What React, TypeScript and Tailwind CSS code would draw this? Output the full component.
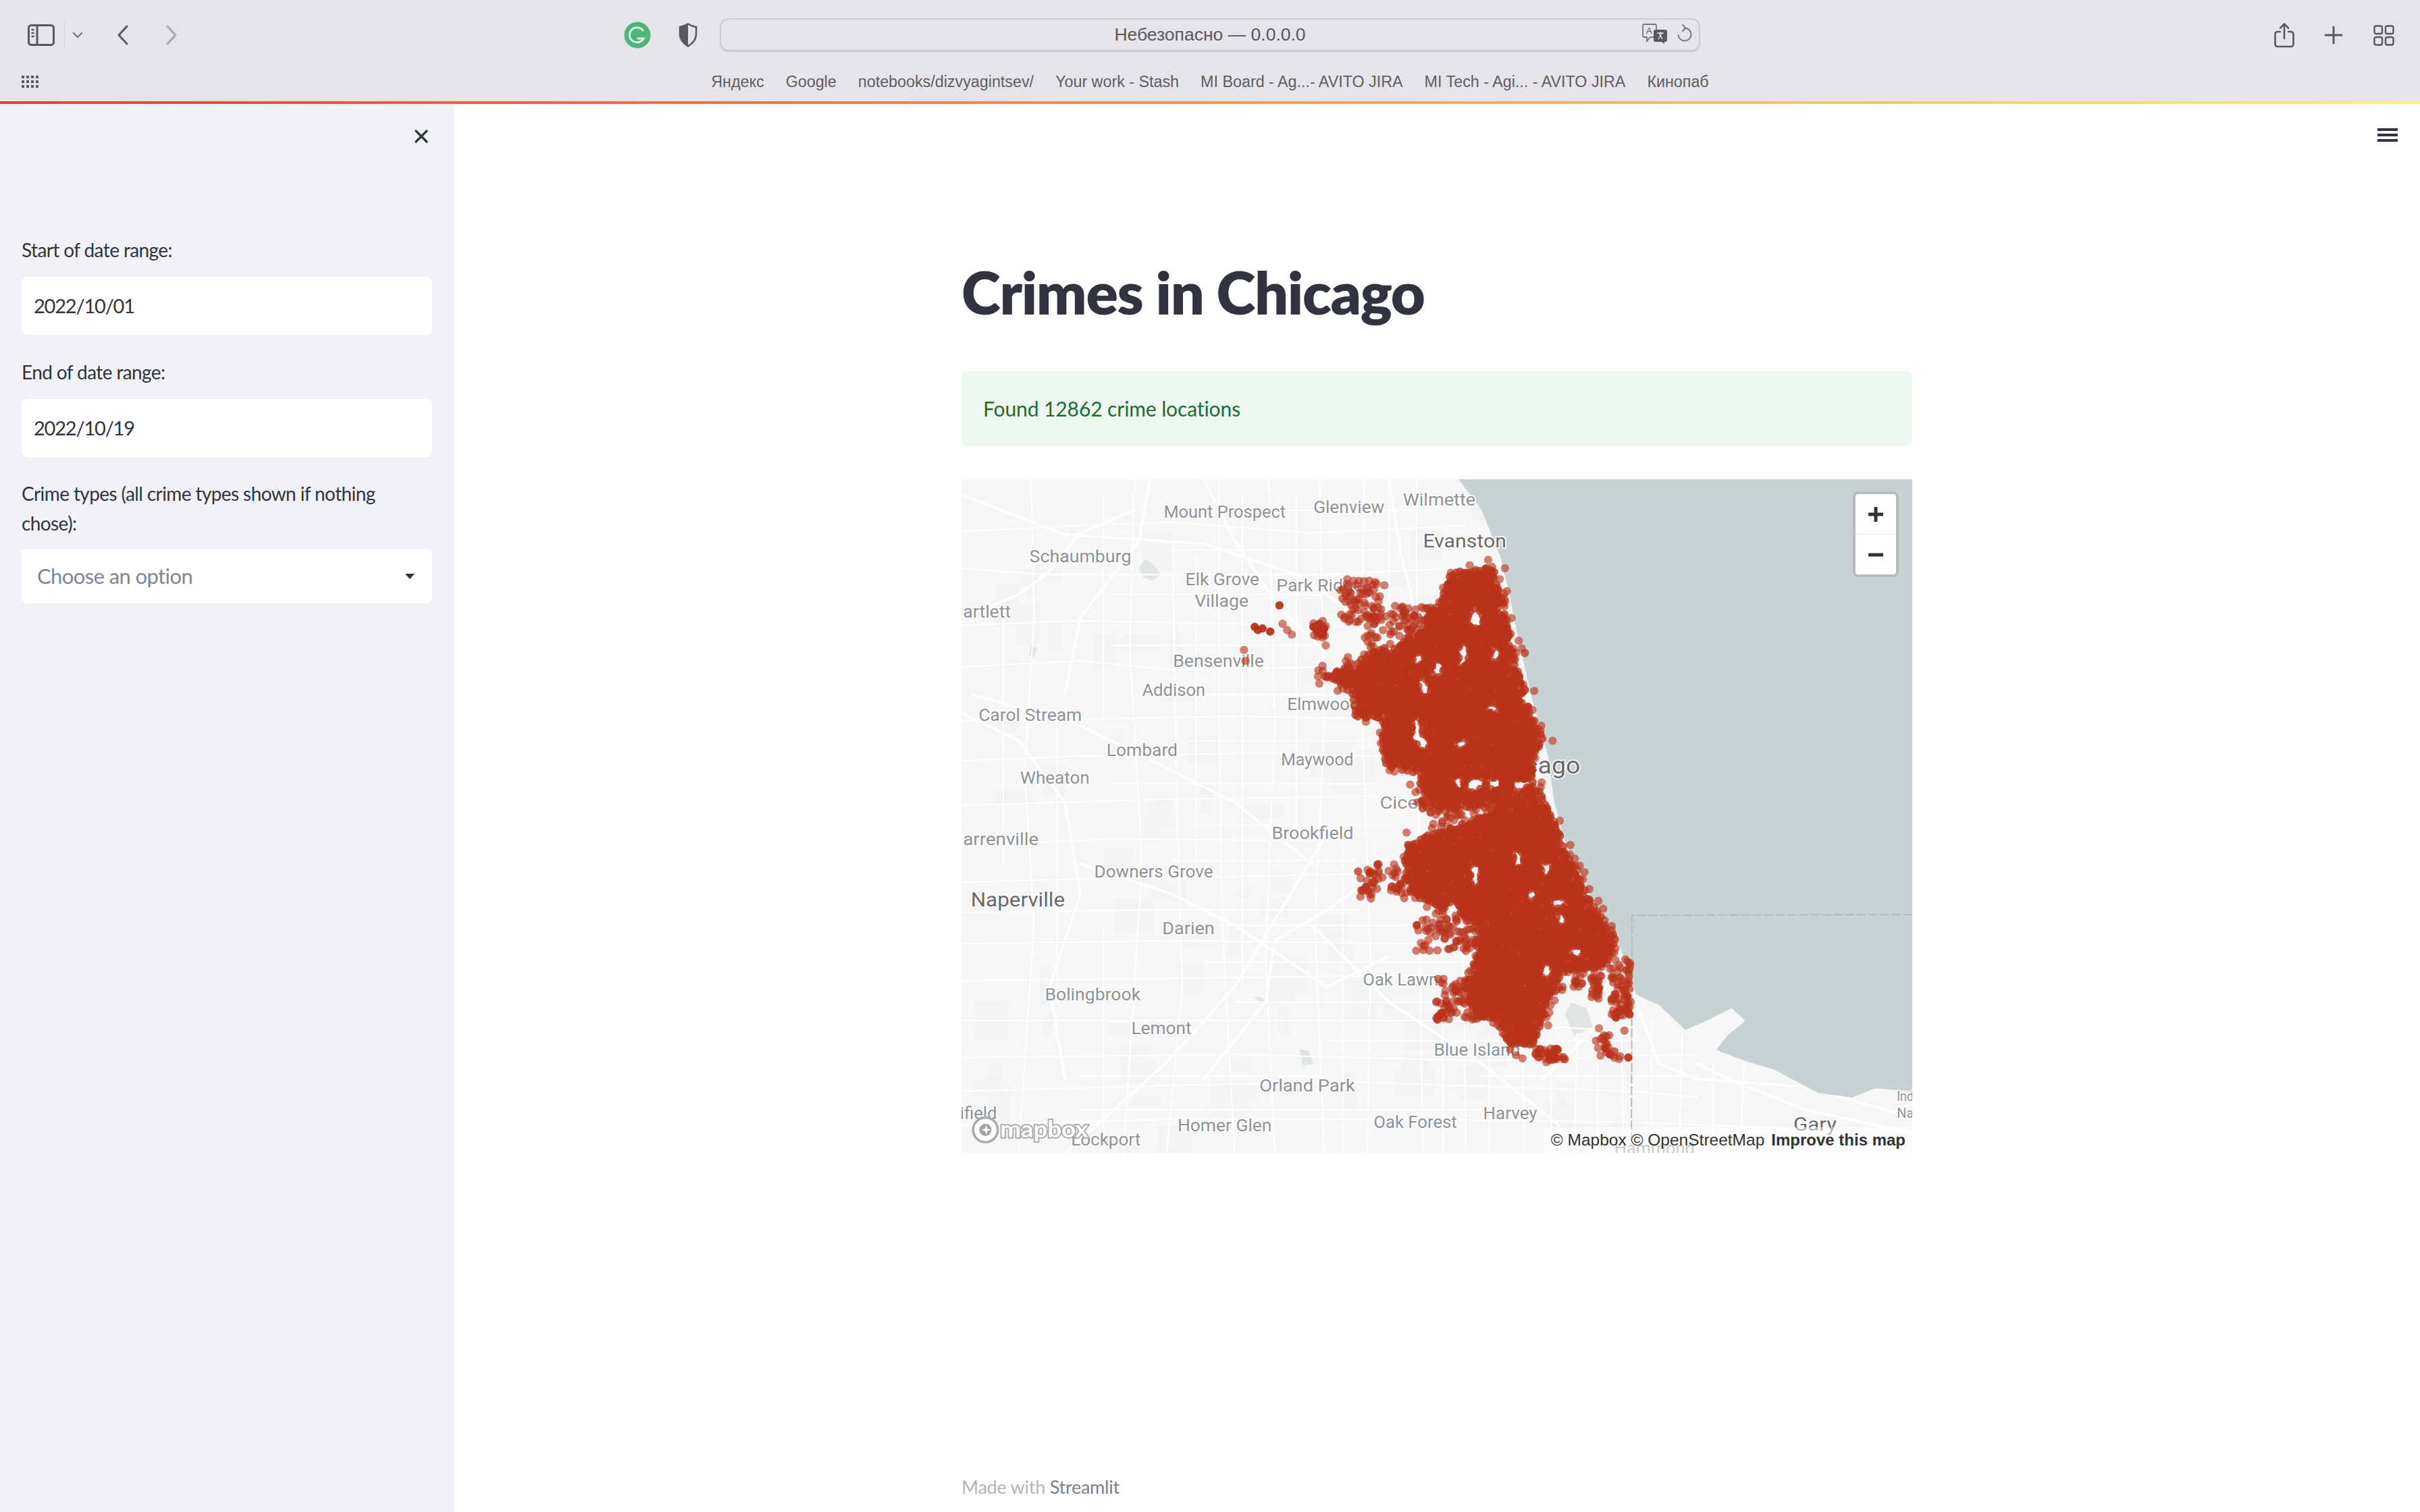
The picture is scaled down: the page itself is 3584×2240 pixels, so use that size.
import { X } from "lucide-react";

const BOOKMARKS = [
  "Яндекс",
  "Google",
  "notebooks/dizvyagintsev/",
  "Your work - Stash",
  "MI Board - Ag...- AVITO JIRA",
  "MI Tech - Agi... - AVITO JIRA",
  "Кинопаб",
];

type Pt = [number, number];

// map geometry is in a 616x438 viewBox starting at 623,310
const NORTH: Pt[] = [
  [938, 372], [950, 369], [965, 366], [970, 373], [975, 395], [979, 416], [985, 440], [991, 460], [1000, 480],
  [993, 492], [993, 506], [1000, 526], [980, 522], [945, 525], [921, 525], [920, 502], [896, 496], [896, 467], [878, 464],
  [876, 449], [858, 438], [871, 432], [888, 423], [925, 408], [922, 398], [933, 392],
];
const SOUTH: Pt[] = [
  [912, 546], [938, 537], [965, 527], [979, 519], [997, 511], [1011, 542], [1021, 565], [1033, 588], [1047, 608], [1042, 625],
  [1013, 631], [1007, 642], [997, 668], [993, 679], [979, 679], [969, 662], [957, 659], [948, 645], [956, 622],
  [958, 599], [940, 591], [914, 580], [910, 560],
];
// centre x, y and half width, half height of the gaps left between dots
const HOLES: [number, number, number, number][] = [
  [956, 401, 3, 3], [948.5, 424, 0.8, 5], [918, 474, 1, 6], [922, 481, 2, 1.5], [947, 482, 1.5, 1.2], [956, 507.5, 4, 2],
  [945, 508, 0.8, 1.5], [919, 426.6, 1.2, 1.5], [932, 433, 0.8, 3], [923, 445, 0.6, 3], [968, 459, 1.5, 0.8],
  [969.5, 424, 0.6, 3], [984, 509, 2, 1.5], [968, 508, 3, 1], [956, 568, 0.8, 6], [984, 557, 1, 3], [1002, 564, 1, 3],
  [1010, 585, 2, 1], [992.7, 580, 1.2, 0.8], [1012, 596, 1, 2], [1021, 617, 1.5, 1], [1002, 630, 1.5, 1.5], [941.5, 589, 1.5, 2],
  [1009, 498, 9, 11],
];
// x, y, width, height, how many dots
const SPARSE: [number, number, number, number, number][] = [
  [868, 376, 26, 30, 60], [884, 392, 45, 30, 90], [881, 560, 30, 23, 50], [917, 595, 41, 22, 70], [930, 633, 35, 29, 70],
  [1044, 622, 13, 38, 70], [1030, 624, 8, 24, 30], [1034, 668, 20, 20, 16], [995, 680, 19, 8, 40], [1017, 636, 9, 4, 8],
  [925, 524, 50, 12, 20], [851, 402, 9, 11, 22],
];
const DOTS: [number, number, number][] = [
  [829, 392, 3], [813, 406, 3], [815, 408, 3], [818, 407, 3], [823, 409, 3], [831, 404, 1], [834, 408, 1], [837, 411, 1],
  [806, 421, 1], [807, 428, 1], [873, 375, 1], [877, 376, 1], [892, 378, 1], [897, 379, 1], [855, 404, 3], [853, 408, 3],
  [856, 410, 3], [851, 406, 3], [858, 407, 3], [857, 413, 1], [859, 418, 1], [1055, 686, 3], [1049, 687, 1], [1036, 667, 1],
  [1037, 674, 1], [1040, 680, 3], [1043, 684, 3], [1046, 682, 2], [1041, 677, 2], [1047, 660, 3], [1048, 657, 3], [932, 659, 3],
  [934, 657, 3], [1006, 480, 1], [986, 420, 1], [988, 423, 2], [984, 415, 1], [880, 565, 2],
  [885, 575, 3], [918, 600, 3], [919, 580, 3], [1002, 689, 1],
];

function inside(x: number, y: number, poly: Pt[]) {
  let hit = false;
  for (let i = 0, j = poly.length - 1; i < poly.length; j = i++) {
    const [xi, yi] = poly[i];
    const [xj, yj] = poly[j];
    if (yi > y !== yj > y && x < ((xj - xi) * (y - yi)) / (yj - yi) + xi) hit = !hit;
  }
  return hit;
}

function edgeDistance(x: number, y: number, poly: Pt[]) {
  let best = Infinity;
  for (let i = 0, j = poly.length - 1; i < poly.length; j = i++) {
    const [ax, ay] = poly[j];
    const [bx, by] = poly[i];
    const dx = bx - ax;
    const dy = by - ay;
    const t = Math.max(0, Math.min(1, ((x - ax) * dx + (y - ay) * dy) / (dx * dx + dy * dy)));
    best = Math.min(best, Math.hypot(x - ax - t * dx, y - ay - t * dy));
  }
  return best;
}

let seed = 12862;
function rnd() {
  seed = (seed + 0x6d2b79f5) | 0;
  let t = Math.imul(seed ^ (seed >>> 15), 1 | seed);
  t = (t + Math.imul(t ^ (t >>> 7), 61 | t)) ^ t;
  return ((t ^ (t >>> 14)) >>> 0) / 4294967296;
}

function makeCrimes() {
  const out: { x: number; y: number; o: number }[] = [];
  for (let x = 850; x < 1060; x += 2.2) {
    for (let y = 358; y < 690; y += 2.2) {
      const px = x + (rnd() - 0.5) * 2.2;
      const py = y + (rnd() - 0.5) * 2.2;
      if (HOLES.some(([hx, hy, w, h]) => ((px - hx) / (w + 2.3)) ** 2 + ((py - hy) / (h + 2.3)) ** 2 < 1)) continue;
      const isIn = inside(px, py, NORTH) || inside(px, py, SOUTH);
      const d = Math.min(edgeDistance(px, py, NORTH), edgeDistance(px, py, SOUTH));
      if (isIn) {
        if (d < 4 && rnd() < 0.15) continue;
        out.push({ x: px, y: py, o: 0.78 });
      } else if (d < 8 && rnd() < 0.2 * (1 - d / 8)) {
        out.push({ x: px, y: py, o: 0.62 });
      }
    }
  }
  for (const [x, y, w, h, n] of SPARSE) {
    for (let i = 0; i < n; i++) out.push({ x: x + rnd() * w, y: y + rnd() * h, o: 0.64 });
  }
  for (const [x, y, k] of DOTS) {
    out.push({ x, y, o: k === 1 ? 0.6 : k === 2 ? 0.75 : 0.95 });
  }
  return out;
}

function makePatches() {
  const out: { x: number; y: number; w: number; h: number }[] = [];
  for (let i = 0; i < 110; i++) {
    out.push({ x: 623 + rnd() * 430, y: 310 + rnd() * 438, w: 6 + rnd() * 22, h: 6 + rnd() * 22 });
  }
  return out;
}

const CRIMES = makeCrimes();
const PATCHES = makePatches();

const WATER =
  "945,310 960,330 972,360 978,385 985,420 992,450 1003,490 1007,520 1014,545 1030,580 1042,600 1050,615 1060,645 1075,652 1092,668 1106,662 1122,654 1131,662 1119,672 1112,681 1130,688 1150,694 1178,709 1200,712 1215,706 1239,708 1239,310";

const MAJOR_ROADS: string[] = [
  "623,320 690,346 780,352 840,372 870,392 895,430",
  "630,450 700,470 800,520 850,560",
  "623,400 660,385 680,370 700,345 735,330",
  "780,310 800,350 830,395 858,422",
  "900,310 908,360 918,400 925,440",
  "860,540 830,590 800,640 755,690 690,748",
  "985,520 930,540 860,590 826,610 820,650 780,700",
  "900,620 860,640 800,600 760,580 700,560",
  "1060,650 1075,690 1100,700 1170,705 1239,725",
  "1000,700 1040,660 1060,640",
  "850,600 900,650 960,690 1010,730",
  "623,462 660,480 690,520 700,580 680,640 690,700",
  "745,310 738,350 700,400 690,450",
  "1100,690 1120,700 1170,720 1239,735",
];

const ROADS: string[] = [
  "623,344 700,340 760,338 850,345 950,340",
  "623,368 680,372 760,372 860,372 940,368",
  "623,405 700,402 800,404 870,406",
  "623,432 700,428 760,434 860,432",
  "623,467 700,466 800,464 900,466",
  "623,493 700,490 820,488 900,490",
  "623,522 760,518 900,516",
  "623,548 720,544 860,545",
  "623,572 700,570 820,568 900,566",
  "623,592 740,590 880,590",
  "623,612 760,610 920,612",
  "623,636 800,634 940,632",
  "623,662 780,662 930,662 1040,668",
  "623,686 800,684 960,688 1100,684",
  "623,708 760,704 880,702 1000,706 1060,708 1100,712",
  "623,730 760,726 900,726 1056,728 1160,732",
  "668,310 670,400 664,500 670,600 660,748",
  "735,310 732,420 740,560 728,748",
  "760,350 762,500 766,640 756,748",
  "790,310 790,470 792,600 800,748",
  "822,310 826,470 820,620 826,748",
  "855,310 858,470 852,600 858,748",
  "884,310 882,450 888,620 886,748",
  "918,310 918,400 920,620 922,748",
  "948,620 950,748",
  "986,680 988,748",
  "1022,670 1020,748",
  "1050,640 1052,748",
  "1090,670 1088,748",
  "1130,690 1128,740",
  "770,330 930,330", "760,356 900,356", "720,385 860,385", "720,418 850,418", "740,450 870,450",
  "770,480 890,480", "720,508 890,508", "770,535 900,535", "760,558 880,558", "790,600 920,600",
  "780,624 950,624", "800,650 950,650", "860,675 1060,675", "700,698 860,698", "960,698 1100,698", "700,720 960,720",
  "650,400 650,560", "685,470 685,640", "715,320 715,470", "715,600 715,748", "775,360 775,560", "805,320 805,640",
  "840,320 840,540", "870,540 870,748", "900,310 900,460", "935,640 935,748", "965,670 965,748", "1005,670 1005,748",
  "1035,670 1035,748", "1070,660 1070,748", "1110,690 1110,748",
];

const LABELS: { t: string; x: number; w: number; y: number; s?: number; dark?: boolean }[] = [
  { t: "Mount Prospect", x: 754, w: 79, y: 331 },
  { t: "Glenview", x: 851, w: 46, y: 328 },
  { t: "Wilmette", x: 909, w: 47, y: 323 },
  { t: "Evanston", x: 922, w: 54, y: 350, s: 12.5, dark: true },
  { t: "Schaumburg", x: 667, w: 66, y: 360 },
  { t: "Elk Grove", x: 768, w: 48, y: 375 },
  { t: "Village", x: 774, w: 35, y: 389 },
  { t: "Park Ridge", x: 827, w: 56, y: 379 },
  { t: "artlett", x: 624, w: 31, y: 396 },
  { t: "Bensenville", x: 760, w: 59, y: 428 },
  { t: "Addison", x: 740, w: 41, y: 447 },
  { t: "Elmwood", x: 834, w: 47, y: 456 },
  { t: "Carol Stream", x: 634, w: 67, y: 463 },
  { t: "Lombard", x: 717, w: 46, y: 486 },
  { t: "Maywood", x: 830, w: 47, y: 492 },
  { t: "Wheaton", x: 661, w: 45, y: 504 },
  { t: "Chicago", x: 964, w: 60, y: 496, s: 15, dark: true },
  { t: "Cicero", x: 894, w: 36, y: 520 },
  { t: "Brookfield", x: 824, w: 53, y: 540 },
  { t: "arrenville", x: 624, w: 49, y: 544 },
  { t: "Downers Grove", x: 709, w: 77, y: 565 },
  { t: "Naperville", x: 629, w: 61, y: 583, s: 13, dark: true },
  { t: "Darien", x: 753, w: 34, y: 602 },
  { t: "Oak Lawn", x: 883, w: 49, y: 635 },
  { t: "Bolingbrook", x: 677, w: 62, y: 645 },
  { t: "Lemont", x: 733, w: 39, y: 667 },
  { t: "Blue Island", x: 929, w: 56, y: 681 },
  { t: "Orland Park", x: 816, w: 62, y: 704 },
  { t: "Harvey", x: 961, w: 35, y: 722 },
  { t: "Oak Forest", x: 890, w: 54, y: 728 },
  { t: "Homer Glen", x: 763, w: 61, y: 730 },
  { t: "Lockport", x: 694, w: 45, y: 739 },
  { t: "Gary", x: 1162, w: 28, y: 729, s: 12, dark: true },
  { t: "Hammond", x: 1046, w: 52, y: 745 },
  { t: "Ind", x: 1229, w: 11, y: 711, s: 9 },
  { t: "Na", x: 1229, w: 11, y: 722, s: 9 },
  { t: "ifield", x: 622, w: 24, y: 722 },
];

function CrimeMap() {
  return (
    <svg viewBox="623 310 616 438" preserveAspectRatio="none" className="block w-full h-full bg-[#f5f6f5]">
      {PATCHES.map((p, i) => (
        <rect key={i} x={p.x} y={p.y} width={p.w} height={p.h} fill="#f2f3f2" />
      ))}
      <path d="M742 362l6 4 4 6-5 4-6-2-3-6zM668 418l4 2-2 6-3-2zM812 646l10 2-4 3zM842 680l6 2 3 8-7 1zM832 704l6-2 4 6-8 1zM1018 650l10 4 4 12-12 6-6-14z" fill="#dfe4e4" />
      <g fill="none" stroke="#ffffff" strokeLinecap="round" strokeLinejoin="round">
        {ROADS.map((d, i) => (
          <polyline key={i} points={d} strokeWidth="0.8" />
        ))}
        {MAJOR_ROADS.map((d, i) => (
          <polyline key={i} points={d} strokeWidth="1.6" />
        ))}
      </g>
      <polygon points={WATER} fill="#c9d2d3" />
      <polyline points="1239,593 1057.5,593.5 1057,748" fill="none" stroke="#b7baba" strokeWidth="0.9" strokeDasharray="6 1.5" />
      <g className="font-['Roboto',sans-serif]">
        {LABELS.map((l) => (
          <text
            key={l.t}
            x={l.x}
            y={l.y + (l.s ?? 11) * 0.36}
            textLength={l.w}
            lengthAdjust="spacingAndGlyphs"
            fontSize={l.s ?? 11}
            fill={l.dark ? "#67696b" : "#8f9294"}
            stroke="#ffffff"
            strokeWidth="1.4"
            paintOrder="stroke"
          >
            {l.t}
          </text>
        ))}
      </g>
      <g fill="#b9321a">
        {CRIMES.map((c, i) => (
          <circle key={i} cx={c.x} cy={c.y} r="2.7" fillOpacity={c.o} />
        ))}
      </g>
      {/* mapbox logo */}
      <circle cx="638.5" cy="733" r="8" fill="#ffffff" fillOpacity="0.85" stroke="#a9abac" strokeWidth="1.6" />
      <circle cx="638.5" cy="733" r="4" fill="#a2a4a5" />
      <path d="M639 730l.8 2.200 2.200.8-2.200.8-.8 2.200-.8-2.200-2.200-.8 2.200-.8z" fill="#ffffff" />
      <text
        x="648"
        y="738"
        textLength="57"
        lengthAdjust="spacingAndGlyphs"
        fontSize="15"
        fontWeight="700"
        fill="#ffffff"
        stroke="#a5a7a8"
        strokeWidth="1.5"
        paintOrder="stroke"
        className="font-['Lato',sans-serif]"
      >
        mapbox
      </text>
    </svg>
  );
}

function DateField({ label, value }: { label: string; value: string }) {
  return (
    <div className="mb-[33px]">
      <label className="block h-[44px] leading-[44px] text-[28px] tracking-[-0.6px] text-[#31333f]">{label}</label>
      <div className="mt-[18px] h-[86px] rounded-[8px] bg-white pl-[18px] leading-[86px] text-[29px] tracking-[-1.2px] text-[#31333f]">
        {value}
      </div>
    </div>
  );
}

export default function App() {
  return (
    <div className="flex flex-col w-[3584px] h-[2240px] overflow-hidden bg-white font-['Lato',sans-serif]">
      {/* Browser chrome */}
      <header className="h-[150px] shrink-0 bg-[#e6e4e9] font-['Liberation_Sans',sans-serif] text-[#59575c]">
        <div className="flex items-center h-[104px] pl-[41px]">
          <svg width="40" height="32" viewBox="0 0 40 32" fill="none" stroke="#59575c" strokeWidth="3">
            <rect x="1.5" y="1.5" width="37" height="29" rx="4" />
            <path d="M14 2v28" />
            <path d="M5.5 8h4M5.5 13h4M5.5 18h4" strokeWidth="2.4" />
          </svg>
          <div className="ml-[14px] h-[38px] w-px bg-[#d5d3d8]" />
          <svg className="ml-[11px]" width="16" height="10" viewBox="0 0 16 10" fill="none" stroke="#77757a" strokeWidth="2.4" strokeLinecap="round">
            <path d="M2 2l6 6 6-6" />
          </svg>
          <svg className="ml-[50px]" width="18" height="30" viewBox="0 0 18 30" fill="none" stroke="#59575c" strokeWidth="3" strokeLinecap="round" strokeLinejoin="round">
            <path d="M15 2L3 15l12 13" />
          </svg>
          <svg className="ml-[54px]" width="18" height="30" viewBox="0 0 18 30" fill="none" stroke="#aaa8ad" strokeWidth="3" strokeLinecap="round" strokeLinejoin="round">
            <path d="M3 2l12 13L3 28" />
          </svg>
          <svg className="ml-[661px]" width="40" height="40" viewBox="0 0 40 40">
            <circle cx="20" cy="20" r="19.5" fill="#4db67b" />
            <path d="M28 13a11 11 0 1 0 1 12h-8" fill="none" stroke="#d9f0e3" strokeWidth="3" strokeLinecap="round" />
          </svg>
          <svg className="ml-[41px]" width="28" height="36" viewBox="0 0 28 36">
            <path d="M14 1.5c4 2.5 8 4 12 4.5v11c0 8-5 13-12 17.5C7 30 2 25 2 17V6c4-.5 8-2 12-4.500z" fill="none" stroke="#59575c" strokeWidth="2.6" />
            <path d="M14 2C10 4.500 6 5.800 2 6v11c0 8 5 13 12 17.500z" fill="#59575c" />
          </svg>
          <div className="relative flex items-center justify-center ml-[33px] w-[1452px] h-[50px] rounded-[13px] border-2 border-[#cbc9ce] border-b-[3px] text-[26.5px]">
            Небезопасно — 0.0.0.0
            <svg className="absolute left-[1364px] top-[6px]" width="40" height="30" viewBox="0 0 40 30">
              <path d="M3 1h16a2 2 0 0 1 2 2v15a2 2 0 0 1-2 2h-7l-5 6v-6H3a2 2 0 0 1-2-2V3a2 2 0 0 1 2-2z" fill="#e6e4e9" stroke="#77757a" strokeWidth="1.8" />
              <text x="6" y="15" fontSize="13" fill="#59575c">A</text>
              <path d="M20 9h14a3 3 0 0 1 3 3v12a3 3 0 0 1-3 3h-1v3l-4-3h-9a3 3 0 0 1-3-3V12a3 3 0 0 1 3-3z" fill="#59575c" />
              <path d="M22 14h10M27 12v2M24 23l5-9M30 23l-5-9" stroke="#e6e4e9" strokeWidth="1.400" fill="none" />
            </svg>
            <svg className="absolute left-[1414px] top-[7px]" width="24" height="28" viewBox="0 0 24 28" fill="none" stroke="#77757a" strokeWidth="2" strokeLinecap="round" strokeLinejoin="round">
              <path d="M13 5.500a9.500 9.500 0 1 1-9.500 10.500" />
              <path d="M10 1l4.500 4.500L10 10" />
            </svg>
          </div>
          <svg className="ml-[850px]" width="30" height="37" viewBox="0 0 30 37" fill="none" stroke="#59575c" strokeWidth="2.6" strokeLinecap="round" strokeLinejoin="round">
            <path d="M9 13H5a3.500 3.500 0 0 0-3.500 3.500v15A3.500 3.500 0 0 0 5 35h20a3.500 3.500 0 0 0 3.500-3.500v-15A3.500 3.500 0 0 0 25 13h-4" />
            <path d="M15 23V2M9 7.500L15 1.500l6 6" />
          </svg>
          <svg className="ml-[44px]" width="28" height="28" viewBox="0 0 28 28" stroke="#59575c" strokeWidth="3" strokeLinecap="round">
            <path d="M14 2v24M2 14h24" />
          </svg>
          <svg className="ml-[45px]" width="31" height="31" viewBox="0 0 31 31" fill="none" stroke="#59575c" strokeWidth="2.4">
            <rect x="1.500" y="1.500" width="11.500" height="11.500" rx="2.500" />
            <rect x="18" y="1.500" width="11.500" height="11.500" rx="2.500" />
            <rect x="1.500" y="18" width="11.500" height="11.500" rx="2.500" />
            <rect x="18" y="18" width="11.500" height="11.500" rx="2.500" />
          </svg>
        </div>
        <div className="relative flex items-center justify-center gap-[32px] h-[34px] text-[23.3px] text-[#5f5d62]">
          <svg className="absolute left-[32px] top-[8px]" width="25" height="18" viewBox="0 0 25 18" fill="#59575c">
            {[0, 7, 14].map((y) =>
              [0, 7, 14, 21].map((x) => <rect key={`${x}-${y}`} x={x} y={y} width="4" height="4" />)
            )}
          </svg>
          {BOOKMARKS.map((b) => (
            <span key={b}>{b}</span>
          ))}
        </div>
      </header>
      <div className="h-[4px] shrink-0 bg-[linear-gradient(90deg,#e23f3e,#f8f07e)]" />

      <div className="flex flex-1 min-h-0">
        {/* Sidebar */}
        <aside className="w-[672px] shrink-0 bg-[#f0f2f6] px-[32px]">
          <div className="flex justify-end h-[194px] pt-[32px]">
            <X className="w-[32px] h-[32px] text-[#31333f]" strokeWidth={2.4} />
          </div>
          <DateField label="Start of date range:" value="2022/10/01" />
          <DateField label="End of date range:" value="2022/10/19" />
          <label className="block mt-[-1px] leading-[44px] text-[28px] tracking-[-0.6px] text-[#31333f]">
            Crime types (all crime types shown if nothing chose):
          </label>
          <div className="flex items-center justify-between mt-[16px] h-[81px] rounded-[8px] bg-white pl-[23px] pr-[26px] text-[31px] tracking-[-0.6px] text-[#808495]">
            Choose an option
            <span className="w-0 h-0 border-x-[7px] border-x-transparent border-t-[8px] border-t-[#31333f]" />
          </div>
        </aside>

        {/* Main */}
        <main className="relative flex-1 min-w-0">
          <div className="absolute right-[33px] top-[36px] flex flex-col gap-[4px] w-[30px]">
            <span className="h-[4px] bg-[#31333f]" />
            <span className="h-[4px] bg-[#31333f]" />
            <span className="h-[4px] bg-[#31333f]" />
          </div>
          <div className="flex flex-col mx-auto w-[1408px] h-full">
            <h1 className="mt-[220px] h-[116px] leading-[116px] text-[88px] font-extrabold tracking-[-1.3px] text-[#31333f]">
              Crimes in Chicago
            </h1>
            <div className="flex items-center mt-[60px] h-[111px] rounded-[8px] bg-[#edf7ef] pl-[32px] text-[30px] tracking-[-0.1px] text-[#1d6b30]">
              Found 12862 crime locations
            </div>
            <div className="relative mt-[49px] h-[998px] overflow-hidden">
              <CrimeMap />
              <div className="absolute right-[24px] top-[22px] flex flex-col w-[60px] h-[119px] rounded-[4px] bg-white shadow-[0_0_0_4px_rgba(0,0,0,0.1)] font-['Liberation_Sans',sans-serif]">
                <div className="flex flex-1 items-center justify-center border-b border-[#e6e6e6]">
                  <svg width="24" height="24" viewBox="0 0 24 24" stroke="#333333" strokeWidth="5">
                    <path d="M12 1v22M1 12h22" />
                  </svg>
                </div>
                <div className="flex flex-1 items-center justify-center">
                  <svg width="24" height="24" viewBox="0 0 24 24" stroke="#333333" strokeWidth="5">
                    <path d="M1 12h22" />
                  </svg>
                </div>
              </div>
              <div className="absolute right-0 bottom-0 flex gap-[10px] bg-white/50 pl-[10px] pr-[10px] h-[38px] leading-[38px] text-[#333333] font-['Liberation_Sans',sans-serif]">
                <span className="text-[24.5px]">© Mapbox © OpenStreetMap</span>
                <span className="text-[24px] font-bold">Improve this map</span>
              </div>
            </div>
            <footer className="mt-auto mb-[20px] h-[34px] leading-[34px] text-[27px] tracking-[-0.25px] text-[#b3b4ba]">
              Made with <span className="text-[#7d7e87]">Streamlit</span>
            </footer>
          </div>
        </main>
      </div>
    </div>
  );
}
